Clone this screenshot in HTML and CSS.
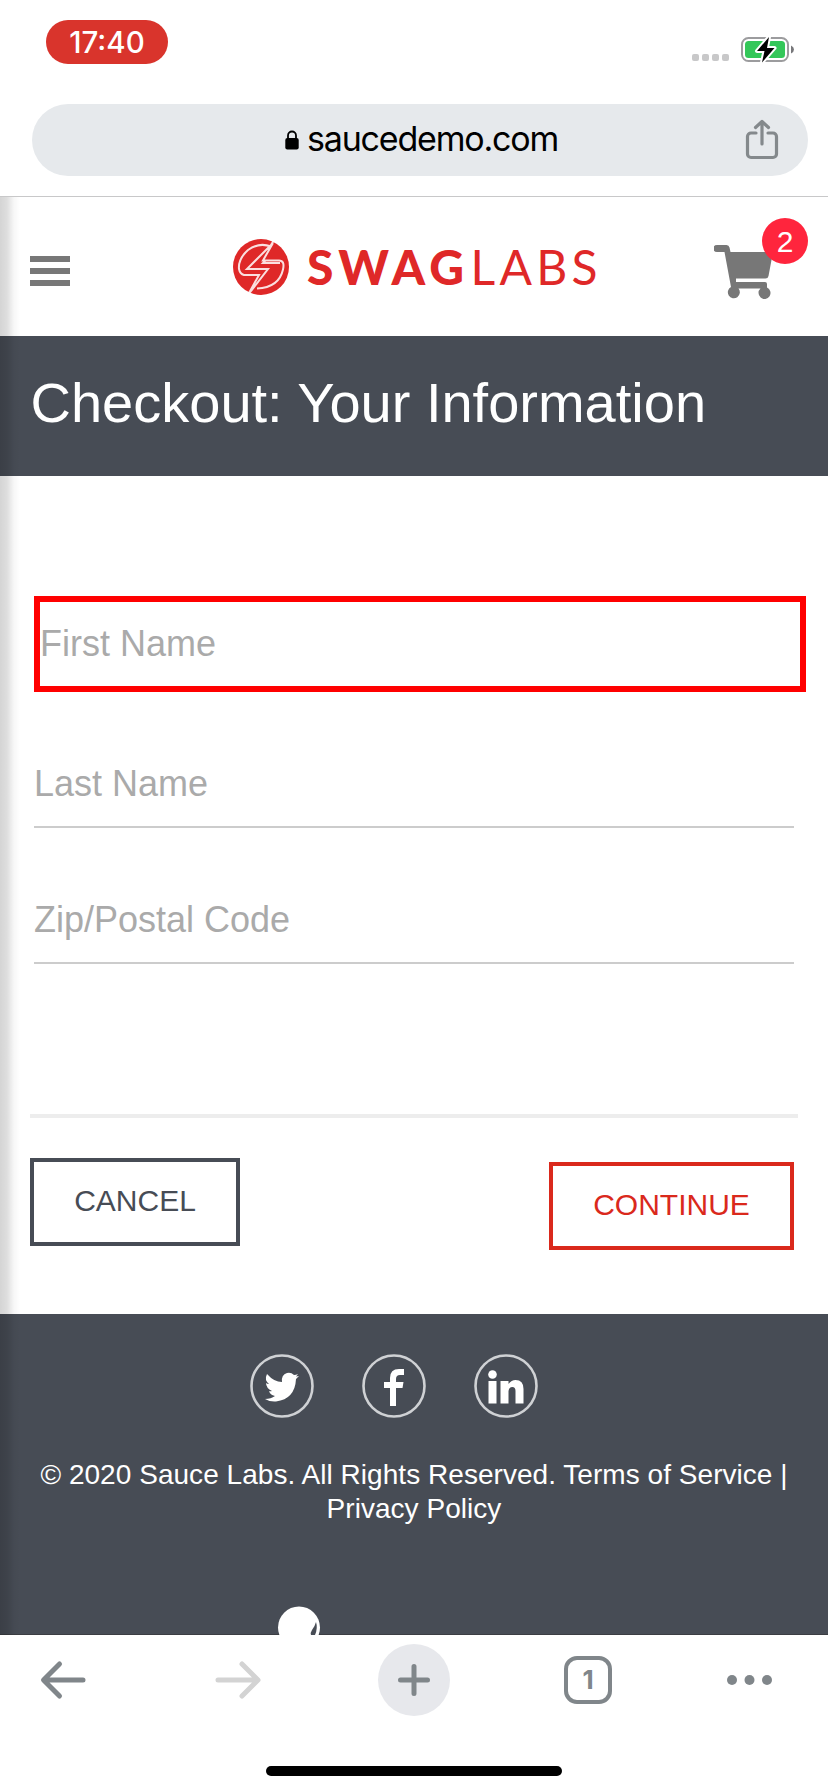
FILE: index.html
```html
<!DOCTYPE html>
<html lang="en">
<head>
<meta charset="utf-8">
<title>Swag Labs</title>
<link rel="stylesheet" href="styles.css">
</head>
<body>
<div class="screen">
  <div class="browser-top">
    <div class="status">
      <span class="time">17:40</span>
      <svg class="status-icons" width="104" height="28" viewBox="0 0 104 28">
        <g fill="#c8c8c9"><rect x="0" y="18" width="7" height="7" rx="2"/><rect x="10" y="18" width="7" height="7" rx="2"/><rect x="20" y="18" width="7" height="7" rx="2"/><rect x="30" y="18" width="7" height="7" rx="2"/></g>
        <rect x="50" y="2" width="46" height="23" rx="6.5" fill="#fff" stroke="#9c9c9e" stroke-width="2"/>
        <rect x="53" y="5" width="40" height="17" rx="3.5" fill="#34c759"/>
        <path d="M99 9.500q3 1.500 3 4t-3 4z" fill="#77777a"/>
        <path d="M77 1 65 15h7.500L70 26.500 82.500 12H75z" fill="#000" stroke="#fff" stroke-width="4" stroke-linejoin="round" paint-order="stroke"/>
      </svg>
    </div>
    <div class="address">
      <svg class="lock" width="14" height="20" viewBox="0 0 14 20"><rect x="0.300" y="8" width="13.400" height="11.500" rx="2"/><path d="M3 9V5.500a4 4 0 0 1 8 0V9" fill="none" stroke="#000" stroke-width="1.800"/></svg>
      <span class="host">saucedemo.com</span>
      <svg class="share" width="34" height="42" viewBox="0 0 34 42" fill="none" stroke="#84898c" stroke-width="3.200" stroke-linecap="round" stroke-linejoin="round"><path d="M11 14H6a3.500 3.500 0 0 0-3.500 3.500V35A3.500 3.500 0 0 0 6 38.500h22a3.500 3.500 0 0 0 3.500-3.500V17.500A3.500 3.500 0 0 0 28 14h-5M17 25V3M10.500 8.500 17 2.500l6.500 6"/></svg>
    </div>
  </div>
  <div class="page">
    <header class="header">
      <svg class="menu" width="40" height="30" fill="#777"><rect width="40" height="6"/><rect y="12" width="40" height="6"/><rect y="24" width="40" height="6"/></svg>
      <svg class="logo" width="370" height="60" viewBox="0 0 370 60">
        <circle cx="29" cy="30" r="28" fill="#df2828"/>
        <g fill="none" stroke="#fff" stroke-opacity=".85" stroke-width="2">
          <path d="M42 3 39 8M39 9.500Q27 5 16 13 6 22 7 32q1 5 5 6h15L16.500 57M41 6 15 32h21L17.500 56M41 6 31 23.500h16q6 0 4 9-4 18-26 19M33.500 23.500 31 26H48"/>
        </g>
        <text class="logo-bold" x="75" y="47.500" textLength="157">SWAG</text>
        <text class="logo-light" x="238.500" y="47.500" textLength="127">LABS</text>
      </svg>
      <div class="cart">
        <svg width="60" height="56" viewBox="0 0 60 56" fill="#777"><path d="M3 0h9.500q2.500 0 3 2.500l1 4.500H59l-4.500 24q-.5 2.500-3 2.500H22v3.500h29q2 0 2 2v3.500a6 6 0 1 1-6.500 1H24.500a6 6 0 1 1-7.500-1.500L10.500 7H3a3.500 3.500 0 0 1 0-7z"/></svg>
        <span class="badge">2</span>
      </div>
    </header>
    <h1 class="title">Checkout: Your Information</h1>
    <main class="checkout">
      <div class="fields">
        <div class="field focused">First Name</div>
        <div class="field">Last Name</div>
        <div class="field">Zip/Postal Code</div>
      </div>
      <div class="actions">
        <div class="btn cancel">CANCEL</div>
        <div class="btn continue">CONTINUE</div>
      </div>
    </main>
    <footer class="footer">
      <div class="socials">
        <svg width="64" height="64" viewBox="0 0 64 64"><circle cx="32" cy="32" r="30.500" fill="none" stroke="#cfd1d4" stroke-width="2.600"/><path d="M48 20q-2 1-4 1-3-3-7-2-6 2-5 9-8 0-15-8-3 6 2 10-2 0-3-1 0 5 6 8-2 .5-3 0 1 4 6 5-4 3-10 3 5 3 11 2.500Q45 45 46 25l3-3-3 .500z" fill="#fff"/></svg>
        <svg width="64" height="64" viewBox="0 0 64 64"><circle cx="32" cy="32" r="30.500" fill="none" stroke="#cfd1d4" stroke-width="2.600"/><path d="M28 52V34h-6v-6h6v-4q0-9 9-9h5v6h-4q-4 0-4 4v3h7.500l-1 6H34v18z" fill="#fff"/></svg>
        <svg width="64" height="64" viewBox="0 0 64 64"><circle cx="32" cy="32" r="30.500" fill="none" stroke="#cfd1d4" stroke-width="2.600"/><g fill="#fff"><circle cx="18.500" cy="20.500" r="4.300"/><path d="M14.500 27h8v22.500h-8zM26.500 27h8v3q3-4 7-4 8 0 8 9v14.500h-8V37q0-4-3.200-4T34.500 37v12.500h-8z"/></g></svg>
      </div>
      <p class="copy">© 2020 Sauce Labs. All Rights Reserved. Terms of Service |<br>Privacy Policy</p>
      <svg class="robot" width="44" height="29" viewBox="0 0 44 29"><circle cx="22" cy="21.500" r="21" fill="#fff"/><path d="M39 16q2 6-1 13h-4q-1-2 1-5 3-4 4-8z" fill="#474c55"/></svg>
    </footer>
    <div class="edge-shadow"></div>
  </div>
  <nav class="toolbar">
    <svg width="828" height="156" viewBox="0 0 828 156" fill="none" stroke-linecap="round" stroke-linejoin="round" stroke-width="5">
      <path d="M59.500 28 43.500 44l16 16M44 44h39" stroke="#80868a"/>
      <path d="m242 28 16 16-16 16M257 44h-39" stroke="#d3d3d3"/>
      <circle cx="414" cy="44" r="36" fill="#e7e8ec"/>
      <path d="M414 30.500v27M400.500 44h27" stroke="#80868a"/>
      <rect x="566" y="22" width="44" height="44" rx="11" stroke="#80868a" stroke-width="4"/>
      <g fill="#80868a"><circle cx="732" cy="44" r="5"/><circle cx="749.500" cy="44" r="5"/><circle cx="767" cy="44" r="5"/></g>
      <rect x="266" y="130" width="296" height="10" rx="5" fill="#000"/>
      <text class="tab-count" x="588" y="53" text-anchor="middle">1</text>
    </svg>
  </nav>
</div>
</body>
</html>
```
FILE: styles.css
```css
* { box-sizing: border-box; }
body { margin: 0; background: #fff; font-family: "Liberation Sans", Arial, sans-serif; }
svg { display: block; flex: none; }
.screen { width: 828px; height: 1792px; overflow: hidden; display: flex; flex-direction: column; }
.browser-top { height: 197px; flex: none; border-bottom: 1px solid #c8c8c9; font-family: Inter, sans-serif; }
.status { height: 104px; padding: 20px 32px 0 46px; display: flex; justify-content: space-between; align-items: flex-start; }
.time { width: 122px; height: 44px; border-radius: 22px; background: #d9342c; color: #fff; font-size: 29.5px; font-weight: 450; line-height: 45px; text-align: center; }
.status-icons { margin: 16px 0 0; }
.address { height: 72px; margin: 0 20px 0 32px; padding: 0 29px 0 253px; border-radius: 36px; background: #e6e9ec; display: flex; align-items: center; }
.host { margin-left: 8px; font-size: 34px; line-height: 69px; height: 72px; letter-spacing: -1.2px; color: #000; }
.share { margin-left: auto; }
.page { height: 1438px; flex: none; position: relative; overflow: hidden; }
.header { height: 139px; padding-left: 30px; display: flex; align-items: flex-start; }
.menu { margin-top: 59px; }
.logo { margin: 40px 0 0 162px; }
.logo text { font-family: Lato, sans-serif; font-size: 48px; fill: #df2828; }
.logo .logo-bold { font-weight: 900; }
.logo .logo-light { font-weight: 400; }
.cart { margin: 48px 0 0 112px; width: 60px; height: 56px; position: relative; }
.badge { position: absolute; left: 48px; top: -27px; width: 46px; height: 46px; border-radius: 50%; background: #ff253d; color: #fff; font-size: 30px; line-height: 47px; text-align: center; }
.title { margin: 0; height: 140px; padding: 0 0 7px 30.500px; background: #474c55; color: #fff; font-size: 56px; font-weight: 400; display: flex; align-items: center; white-space: nowrap; }
.checkout { height: 838px; padding: 120px 30px 0; }
.fields { height: 522px; padding-left: 4px; border-bottom: 4px solid #ededed; }
.field { width: 760px; height: 87px; margin-bottom: 49px; border-bottom: 2px solid #ccc; display: flex; align-items: center; font-size: 36px; color: #aaa; }
.field.focused { width: 772px; height: 96px; border: 6px solid #f00; }
.actions { display: flex; justify-content: space-between; padding: 40px 4px 0 0; }
.btn { height: 88px; padding-bottom: 2px; border: 4px solid; display: flex; align-items: center; justify-content: center; font-size: 30px; }
.cancel { width: 210px; color: #474c55; }
.continue { width: 245px; margin-top: 4px; color: #da291c; }
.footer { height: 321px; background: #474c55; border-bottom: 1px solid #3b3d42; color: #fff; padding-top: 40px; }
.socials { display: flex; gap: 48px; padding-left: 250px; }
.copy { margin: 40px 0 0; font-size: 28px; line-height: 34px; letter-spacing: 0.04px; text-align: center; white-space: nowrap; }
.robot { margin: 80px 0 0 277px; }
.edge-shadow { position: absolute; left: 0; top: 0; width: 20px; height: 1438px; background: linear-gradient(90deg, rgba(0,0,0,.17), rgba(0,0,0,.13) 35%, rgba(0,0,0,.03) 70%, transparent); }
.toolbar { height: 157px; flex: none; padding-top: 1px; }
.tab-count { font-family: Inter, sans-serif; font-size: 26px; font-weight: 700; fill: #80868a; }
```
